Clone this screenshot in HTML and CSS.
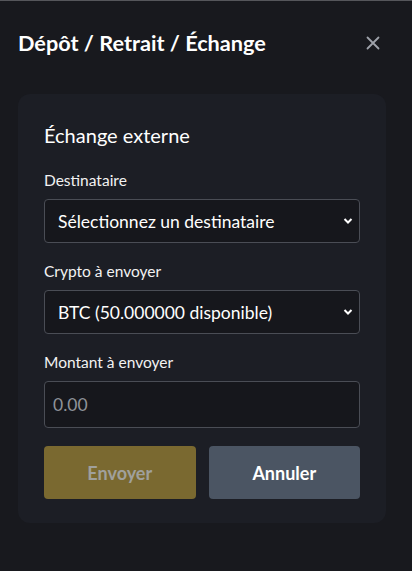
FILE: index.html
```html
<!DOCTYPE html>
<html lang="fr">
<head>
<meta charset="utf-8">
<link rel="stylesheet" href="styles.css">
</head>
<body>
<div class="modal">
  <header class="modal-header">
    <h1 class="modal-title">Dépôt / Retrait / Échange</h1>
    <button class="close-btn" aria-label="Fermer">
      <svg width="14" height="14" viewBox="0 0 14 14"><path d="M1.5 1.5 L12.5 12.5 M12.5 1.5 L1.5 12.5" stroke="#9ea2aa" stroke-width="1.8" stroke-linecap="round"/></svg>
    </button>
  </header>
  <section class="card">
    <h2 class="card-title">Échange externe</h2>
    <div class="field">
      <label class="field-label">Destinataire</label>
      <div class="select">
        <span>Sélectionnez un destinataire</span>
        <svg class="chev" width="10" height="8" viewBox="0 0 10 8"><path d="M1.5 2 L5 5.5 L8.5 2" fill="none" stroke="#ffffff" stroke-width="2"/></svg>
      </div>
    </div>
    <div class="field">
      <label class="field-label">Crypto à envoyer</label>
      <div class="select">
        <span>BTC (50.000000 disponible)</span>
        <svg class="chev" width="10" height="8" viewBox="0 0 10 8"><path d="M1.5 2 L5 5.5 L8.5 2" fill="none" stroke="#ffffff" stroke-width="2"/></svg>
      </div>
    </div>
    <div class="field">
      <label class="field-label">Montant à envoyer</label>
      <div class="input"><span class="placeholder">0.00</span></div>
    </div>
    <div class="actions">
      <button class="btn btn-send">Envoyer</button>
      <button class="btn btn-cancel">Annuler</button>
    </div>
  </section>
</div>
</body>
</html>
```
FILE: styles.css
```css
* {
  box-sizing: border-box;
}
html, body {
  margin: 0;
  padding: 0;
  background: #18191e;
  font-family: Lato, "Noto Sans", sans-serif;
  color: #ffffff;
}
body {
  border-top: 1px solid #55565b;
  height: 571px;
}
.modal {
  padding: 0 26px 0 18px;
}
.modal-header {
  display: flex;
  align-items: center;
  justify-content: space-between;
  height: 84px;
  margin-bottom: 9px;
}
.modal-title {
  margin: 0;
  font-size: 21.7px;
  line-height: 28px;
  font-weight: 700;
  color: #ffffff;
}
.close-btn {
  background: none;
  border: none;
  padding: 0;
  margin-right: 6px;
  width: 14px;
  height: 14px;
  display: flex;
}
.card {
  background: #1c1e25;
  border-radius: 12px;
  padding: 28px 26px 24px 26px;
  display: flex;
  flex-direction: column;
}
.card-title {
  margin: 0 0 22px;
  font-size: 20px;
  font-weight: 400;
  line-height: 26px;
}
.field {
  display: flex;
  flex-direction: column;
  margin-bottom: 18px;
}
.field-label {
  font-size: 15.5px;
  line-height: 20px;
  margin-bottom: 9px;
  color: #f2f2f2;
}
.select, .input {
  height: 44px;
  border: 1px solid #4a4d55;
  border-radius: 4px;
  background: #16171c;
  display: flex;
  align-items: center;
  justify-content: space-between;
  font-size: 17.5px;
}
.select {
  padding: 0 6px 0 13px;
}
.input {
  height: 47px;
  padding: 0 8px;
}
.placeholder {
  color: #8e9299;
}
.chev {
  display: block;
}
.actions {
  display: grid;
  grid-template-columns: 1fr 1fr;
  gap: 13px;
}
.btn {
  height: 53px;
  border: none;
  border-radius: 4px;
  font-family: Lato, "Noto Sans", sans-serif;
  font-size: 18px;
  font-weight: 700;
}
.btn-send {
  background: #7a6930;
  color: #a0a09c;
}
.btn-cancel {
  background: #4b5563;
  color: #ffffff;
}
```
